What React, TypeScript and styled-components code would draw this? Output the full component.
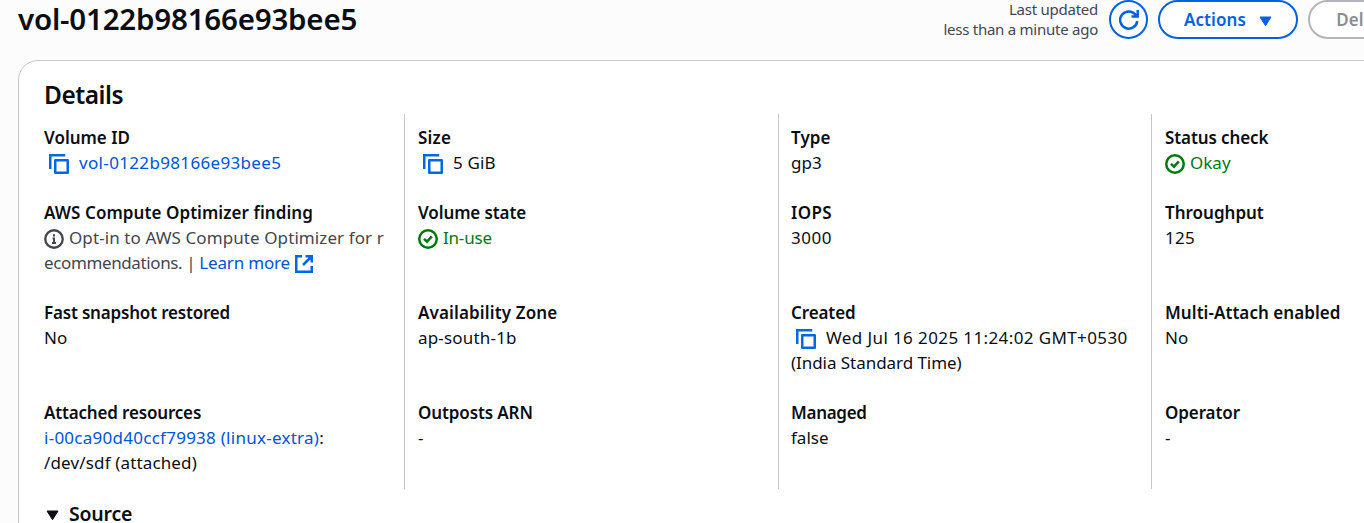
import React from 'react';
import styled, { createGlobalStyle } from 'styled-components';

const Global = createGlobalStyle`
  * { box-sizing: border-box; }
  html, body { margin: 0; height: 100%; overflow: hidden; background: #fcfcfd; }
  body { font: 400 17px/25px "Noto Sans", "Open Sans", sans-serif; color: #0a0e14; }
`;

const Page = styled.main`
  width: 1419px;
  height: 523px;
  overflow: hidden;
`;
const Header = styled.header`
  display: flex;
  height: 60px;
  padding-left: 18px;
  align-items: flex-start;
  justify-content: space-between;
`;
const Title = styled.h1`
  margin: 0;
  font-size: 29.5px;
  font-weight: 650;
  line-height: 38px;
  letter-spacing: -0.2px;
`;
const Toolbar = styled.div`
  display: flex;
  align-items: flex-start;
  gap: 10px;
`;
const Updated = styled.div`
  margin: -1px 1px 0 0;
  text-align: right;
  font-size: 15px;
  line-height: 20px;
  letter-spacing: -0.25px;
  color: #424650;
`;
const Button = styled.button<{ $width: number; $disabled?: boolean }>`
  display: flex;
  align-items: center;
  justify-content: center;
  gap: 13px;
  width: ${(p) => p.$width}px;
  height: 39px;
  padding: 0;
  border: 2px solid ${(p) => (p.$disabled ? '#b4b4bb' : '#0062e0')};
  border-radius: 20px;
  background: #fff;
  font: 650 17px/25px "Noto Sans", sans-serif;
  letter-spacing: 0.1px;
  color: ${(p) => (p.$disabled ? '#8c8c94' : '#0062e0')};
`;

const Card = styled.section`
  height: 600px;
  margin-left: 18px;
  padding: 19px 12px 0;
  border: 1px solid #c6c6cd;
  border-radius: 20px;
  background: #fff;
`;
const CardTitle = styled.h2`
  margin: 0 0 4px 13px;
  font-size: 24.5px;
  font-weight: 600;
  line-height: 30px;
  letter-spacing: -0.5px;
`;
const Grid = styled.div`
  display: grid;
  grid-template-columns: 373px 374px 373px 374px;
  grid-template-rows: 75px 100px 100px 100px;
`;
const Cell = styled.div`
  padding: 11px 0 0 13px;
  border-left: 1px solid #c6c6cd;
  white-space: nowrap;
  &:nth-child(4n + 1) { border-left-color: transparent; padding-left: 12px; }
  &:nth-child(4n + 3) { padding-left: 12px; }
`;
const Label = styled.div<{ $track?: number }>`
  font-weight: 620;
  letter-spacing: ${(p) => p.$track ?? 0}px;
`;
const Row = styled.div`
  display: flex;
  align-items: center;
  height: 25px;
`;
type Tone = 'text' | 'link' | 'muted' | 'success';
const tones: Record<Tone, string> = { text: '#0a0e14', link: '#0052d9', muted: '#424650', success: '#00770f' };
const Text = styled.span<{ $tone?: Tone; $track?: number }>`
  color: ${(p) => tones[p.$tone ?? 'text']};
  letter-spacing: ${(p) => p.$track ?? 0.15}px;
  white-space: pre;
`;
const Icon = styled.svg<{ $before?: number; $after?: number }>`
  flex: none;
  fill: none;
  margin: 3px ${(p) => p.$after ?? 0}px 0 ${(p) => p.$before ?? 0}px;
`;
const Expander = styled.div`
  display: flex;
  align-items: center;
  gap: 10px;
  margin: 12px 0 0 15px;
  font-size: 19.5px;
  font-weight: 620;
  letter-spacing: -0.2px;
`;
const Caret = styled.svg`
  flex: none;
  margin-top: 3px;
  fill: currentColor;
  stroke: currentColor;
  stroke-linejoin: round;
`;

const CopyIcon = () => (
  <Icon $before={5} $after={10} width="20" height="20" viewBox="0 0 20 20" stroke="#0068e0" strokeWidth="2.5">
    <path d="M1.25 15V1.25H16.25" />
    <rect x="6.25" y="6.25" width="12.5" height="12.5" strokeLinejoin="round" />
  </Icon>
);
const CheckIcon = () => (
  <Icon $after={5} width="20" height="20" viewBox="0 0 20 20" stroke="#00770f" strokeWidth="2.5">
    <circle cx="10" cy="10" r="8.75" />
    <path d="M6 9.8l3 2.9 4.8-5.4" />
  </Icon>
);
const InfoIcon = () => (
  <Icon $after={5} width="20" height="20" viewBox="0 0 20 20" stroke="#424650" strokeWidth="2.3">
    <circle cx="10" cy="10" r="8.75" />
    <path d="M10 5.2v2.2M8.6 9.6H10v4.6M8 14h4" strokeWidth="2" />
  </Icon>
);
const ExternalIcon = () => (
  <Icon $before={5} width="18" height="18" viewBox="0 0 18 18" stroke="#0068e0" strokeWidth="2.5">
    <path d="M7 1.25H1.25v15.5h15.5V11M10.5 1.25h6.25V7.5M16.5 1.5L8 10" />
  </Icon>
);
const CaretDown = () => (
  <Caret width="13" height="11" viewBox="0 0 13 11">
    <path d="M1 1h11L6.5 9.7z" />
  </Caret>
);

export default function App() {
  return (
    <Page>
      <Global />
      <Header>
        <Title>vol-0122b98166e93bee5</Title>
        <Toolbar>
          <Updated>
            Last updated
            <br />
            less than a minute ago
          </Updated>
          <Button $width={39} aria-label="Refresh">
            <svg width="20" height="20" viewBox="0 0 20 20" fill="none" stroke="#0062e0" strokeWidth="2.5">
              <path d="M18.3 11A8.6 8.6 0 1 1 16.6 4.8L18 6.4M18.7 0v6.4H12.5" />
            </svg>
          </Button>
          <Button $width={140}>
            Actions
            <CaretDown />
          </Button>
          <Button $width={111} $disabled>Delete</Button>
        </Toolbar>
      </Header>
      <Card>
        <CardTitle>Details</CardTitle>
        <Grid>
          <Cell>
            <Label>Volume ID</Label>
            <Row><CopyIcon /><Text $tone="link" $track={0.34}>vol-0122b98166e93bee5</Text></Row>
          </Cell>
          <Cell>
            <Label $track={0.2}>Size</Label>
            <Row><CopyIcon /><Text>5 GiB</Text></Row>
          </Cell>
          <Cell>
            <Label $track={0.05}>Type</Label>
            <Row><Text $track={0}>gp3</Text></Row>
          </Cell>
          <Cell>
            <Label $track={-0.1}>Status check</Label>
            <Row><CheckIcon /><Text $tone="success" $track={0}>Okay</Text></Row>
          </Cell>

          <Cell>
            <Label $track={0.07}>AWS Compute Optimizer finding</Label>
            <Row><InfoIcon /><Text $tone="muted" $track={0.09}>Opt-in to AWS Compute Optimizer for r</Text></Row>
            <Row>
              <Text $tone="muted" $track={-0.38}>ecommendations. | </Text>
              <Text $tone="link" $track={-0.17}>Learn more</Text>
              <ExternalIcon />
            </Row>
          </Cell>
          <Cell>
            <Label $track={-0.1}>Volume state</Label>
            <Row><CheckIcon /><Text $tone="success" $track={-0.2}>In-use</Text></Row>
          </Cell>
          <Cell>
            <Label $track={0.4}>IOPS</Label>
            <Row><Text $track={0.5}>3000</Text></Row>
          </Cell>
          <Cell>
            <Label $track={0}>Throughput</Label>
            <Row><Text $track={0.25}>125</Text></Row>
          </Cell>

          <Cell>
            <Label $track={-0.18}>Fast snapshot restored</Label>
            <Row><Text $track={0}>No</Text></Row>
          </Cell>
          <Cell>
            <Label $track={0.14}>Availability Zone</Label>
            <Row><Text $track={0.18}>ap-south-1b</Text></Row>
          </Cell>
          <Cell>
            <Label $track={-0.1}>Created</Label>
            <Row><CopyIcon /><Text $track={0.39}>Wed Jul 16 2025 11:24:02 GMT+0530</Text></Row>
            <Row><Text $track={-0.05}>(India Standard Time)</Text></Row>
          </Cell>
          <Cell>
            <Label $track={0.06}>Multi-Attach enabled</Label>
            <Row><Text $track={0}>No</Text></Row>
          </Cell>

          <Cell>
            <Label $track={-0.17}>Attached resources</Label>
            <Row>
              <Text $tone="link" $track={0.26}>i-00ca90d40ccf79938 (linux-extra)</Text>
              <Text>:</Text>
            </Row>
            <Row><Text $track={0.15}>/dev/sdf (attached)</Text></Row>
          </Cell>
          <Cell>
            <Label $track={-0.12}>Outposts ARN</Label>
            <Row><Text>-</Text></Row>
          </Cell>
          <Cell>
            <Label $track={-0.3}>Managed</Label>
            <Row><Text $track={0}>false</Text></Row>
          </Cell>
          <Cell>
            <Label $track={-0.1}>Operator</Label>
            <Row><Text>-</Text></Row>
          </Cell>
        </Grid>
        <Expander>
          <CaretDown />
          Source
        </Expander>
      </Card>
    </Page>
  );
}
